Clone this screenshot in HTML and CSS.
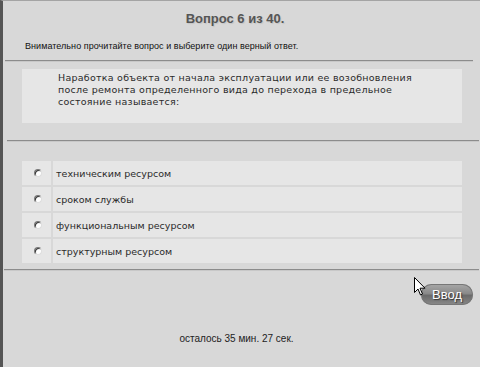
FILE: index.html
```html
<!DOCTYPE html>
<html lang="ru">
<head>
<meta charset="utf-8">
<title>Тест</title>
<link rel="stylesheet" href="styles.css">
</head>
<body>
<div class="page">
  <h1 class="title">Вопрос 6 из 40.</h1>
  <p class="hint">Внимательно прочитайте вопрос и выберите один верный ответ.</p>
  <hr class="rule rule-1">
  <div class="question">Наработка объекта от начала эксплуатации или ее возобновления после ремонта определенного вида до перехода в предельное состояние называется:</div>
  <hr class="rule rule-2">
  <div class="options">
    <label class="option"><span class="radio-cell"><span class="radio"></span></span><span class="text-cell">техническим ресурсом</span></label>
    <label class="option"><span class="radio-cell"><span class="radio"></span></span><span class="text-cell">сроком службы</span></label>
    <label class="option"><span class="radio-cell"><span class="radio"></span></span><span class="text-cell">функциональным ресурсом</span></label>
    <label class="option"><span class="radio-cell"><span class="radio"></span></span><span class="text-cell">структурным ресурсом</span></label>
  </div>
  <hr class="rule rule-3">
  <div class="actions">
    <button class="submit">Ввод</button>
    <svg class="cursor" width="13" height="19" viewBox="0 0 13 19"><path d="M0.5 0.5 L0.5 15.5 L4 12 L6.5 18 L8.5 17 L6 11.2 L11 11.2 Z" fill="#fff" stroke="#000" stroke-width="1"/></svg>
  </div>
  <p class="timer">осталось 35 мин. 27 сек.</p>
</div>
</body>
</html>
```

FILE: styles.css
```css
html, body {
  margin: 0;
  padding: 0;
  background: #d8d8d8;
}
.page {
  width: 480px;
  height: 367px;
  box-sizing: border-box;
  border-left: 3px solid #555;
  border-top: 1px solid #a4a4a4;
  font-family: "Liberation Sans", Arial, sans-serif;
  color: #111;
  overflow: hidden;
}
.title {
  margin: 11px 0 0;
  text-align: center;
  font-size: 13px;
  line-height: 14px;
  font-weight: bold;
  color: #555;
  text-shadow: 1px 1px 1px #c4c4c4;
  padding-right: 13px;
}
.hint {
  margin: 14px 0 0 22px;
  font-size: 9px;
  line-height: 12px;
  letter-spacing: 0.05px;
}
.rule {
  border: 0;
  height: 1px;
  background: #8c8c8c;
  border-bottom: 1px solid #c8c8c8;
}
.rule-1 {
  margin: 8px 7px 0 2px;
}
.question {
  margin: 7px 18px 0 19px;
  height: 54px;
  box-sizing: border-box;
  background: #e6e6e6;
  padding: 3px 30px 0 36px;
  font-family: "DejaVu Sans", Verdana, sans-serif;
  font-size: 9.5px;
  line-height: 12px;
  letter-spacing: 0.25px;
  color: #2a2a2a;
}
.rule-2 {
  margin: 17px 1px 0 4px;
}
.options {
  margin: 19px 18px 0 19px;
  display: flex;
  flex-direction: column;
  gap: 2px;
}
.option {
  display: flex;
  height: 24px;
  gap: 2px;
}
.radio-cell {
  width: 29px;
  background: #e6e6e6;
  display: flex;
  align-items: center;
  justify-content: center;
}
.radio {
  width: 8px;
  height: 8px;
  border-radius: 50%;
  box-sizing: border-box;
  background: #fff;
  border: 1px solid #777;
  border-right-color: #ddd;
  border-bottom-color: #ddd;
  box-shadow: inset 1px 1px 0 #333;
  margin-left: 2px;
}
.text-cell {
  flex: 1;
  background: #e6e6e6;
  display: flex;
  align-items: center;
  padding-left: 3px;
  font-family: "DejaVu Sans", Verdana, sans-serif;
  font-size: 9.5px;
  color: #2a2a2a;
}
.rule-3 {
  margin: 6px 1px 0 1px;
}
.actions {
  position: relative;
  display: flex;
  justify-content: flex-end;
  padding: 13px 7px 0 0;
}
.submit {
  width: 52px;
  height: 21px;
  border: 0;
  border-radius: 11px;
  background: linear-gradient(#a8a8a8, #8a8a8a 45%, #6a6a6a 55%, #8a8a8a);
  box-shadow: inset 0 0 0 1px #777;
  color: #fff;
  font-family: "Liberation Sans", Arial, sans-serif;
  font-size: 13px;
  line-height: 21px;
  padding: 0;
  text-shadow: 1px 1px 1px #333;
}
.cursor {
  position: absolute;
  left: 411px;
  top: 6px;
}
.timer {
  margin: 28px 0 0;
  text-align: center;
  font-size: 10px;
  line-height: 12px;
  color: #222;
  padding-right: 10px;
}
```
